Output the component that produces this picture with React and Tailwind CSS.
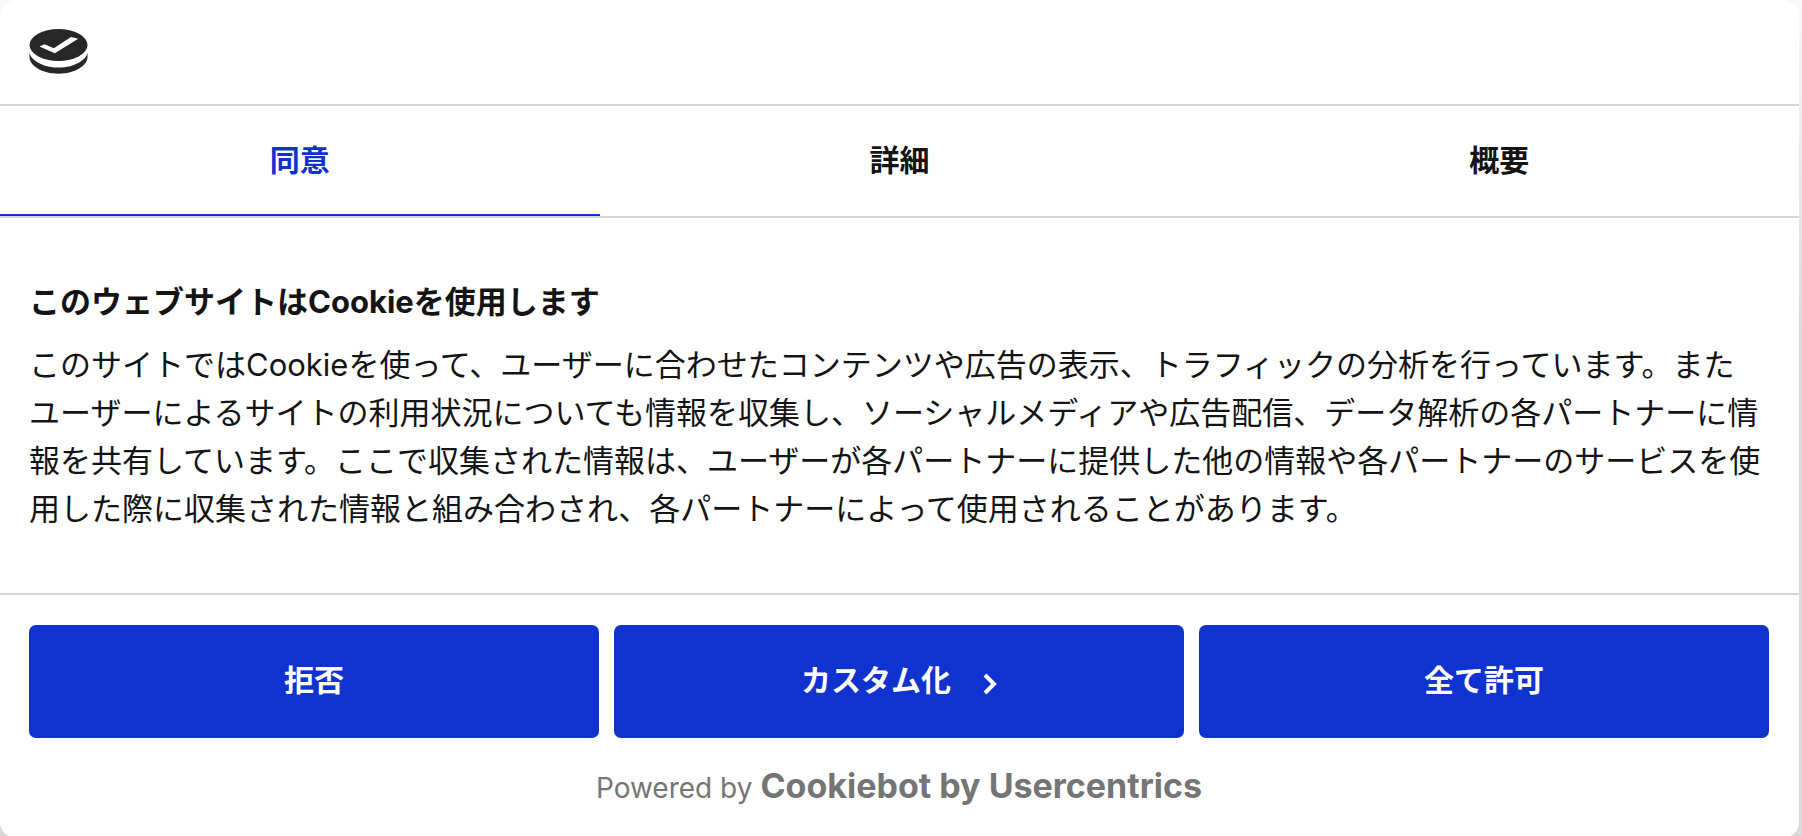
const tabs = [
  { id: "consent", label: "同意", active: true },
  { id: "details", label: "詳細", active: false },
  { id: "about", label: "概要", active: false },
];

function Logo() {
  return (
    <svg viewBox="0 0 60 48" className="h-12 w-[60px]" role="img" aria-label="Cookiebot">
      <ellipse cx="29.5" cy="17" rx="29" ry="16" fill="#272727" />
      <path
        d="M.5 23.5 C.5 31.5 13 39.5 29.5 39.5 S58.5 31.5 58.5 23.5 V29 C58.5 37.5 46 45.7 29.5 45.7 S.5 37.5 .5 29 Z"
        fill="#272727"
      />
      <path d="M10.5 18.4 L15.6 16.2 L24.8 20.2 L42 9 L49.2 10.8 L25.8 25.2 Z" fill="#fff" />
    </svg>
  );
}

function ActionButton({ children }) {
  return (
    <button
      type="button"
      className="flex h-[113px] flex-1 items-center justify-center gap-8 rounded-[7px] bg-[#1032cf] pb-1 text-[30px] leading-9 font-bold text-white"
    >
      {children}
    </button>
  );
}

export default function App() {
  return (
    <div className="min-h-screen bg-linear-to-b from-[#f8f8f8] via-[#dadada] via-40% to-[#dadada] pr-[3px] font-[Inter,'Noto_Sans_CJK_JP',sans-serif] text-[#141414]">
      <div role="dialog" aria-labelledby="cookie-title" className="flex min-h-screen flex-col rounded-[16px] bg-white">
        <header className="border-b-2 border-[#d6d6d6] px-[29px] pt-7 pb-7">
          <Logo />
        </header>

        <div role="tablist" className="flex border-b-2 border-[#d6d6d6]">
          {tabs.map((tab) => (
            <button
              key={tab.id}
              type="button"
              role="tab"
              aria-selected={tab.active}
              className={
                tab.active
                  ? "h-[110px] flex-1 border-b-2 border-[#1032cf] text-[30px] leading-9 font-bold text-[#1032cf]"
                  : "h-[110px] flex-1 border-b-2 border-transparent text-[30px] leading-9 font-bold"
              }
            >
              {tab.label}
            </button>
          ))}
        </div>

        <main className="flex-1 px-[29px] pt-[60px] pb-[60px]">
          <h2 id="cookie-title" className="text-[31px] leading-12 font-bold">
            このウェブサイトはCookieを使用します
          </h2>
          <p className="mt-[15px] text-[31px] leading-12">
            このサイトではCookieを使って、ユーザーに合わせたコンテンツや広告の表示、トラフィックの分析を行っています。また
            <br />
            ユーザーによるサイトの利用状況についても情報を収集し、ソーシャルメディアや広告配信、データ解析の各パートナーに情報を共有しています。ここで収集された情報は、ユーザーが各パートナーに提供した他の情報や各パートナーのサービスを使用した際に収集された情報と組み合わされ、各パートナーによって使用されることがあります。
          </p>
        </main>

        <footer className="border-t-2 border-[#d6d6d6] pt-[30px] pr-[30px] pb-[30px] pl-[29px]">
          <div className="flex gap-[15px]">
            <ActionButton>拒否</ActionButton>
            <ActionButton>
              カスタム化
              <svg viewBox="0 0 14 22" className="mt-2 h-[22px] w-3.5" fill="none" aria-hidden="true">
                <path d="M2 2 L11 11 L2 20" stroke="#fff" strokeWidth="4" />
              </svg>
            </ActionButton>
            <ActionButton>全て許可</ActionButton>
          </div>
          <a
            href="#cookiebot"
            className="mt-7 flex items-baseline justify-center gap-2 leading-10 text-[#757575]"
          >
            <span className="text-[28px]">Powered by</span>
            <span className="text-[34px] font-bold">Cookiebot by Usercentrics</span>
          </a>
        </footer>
      </div>
    </div>
  );
}
